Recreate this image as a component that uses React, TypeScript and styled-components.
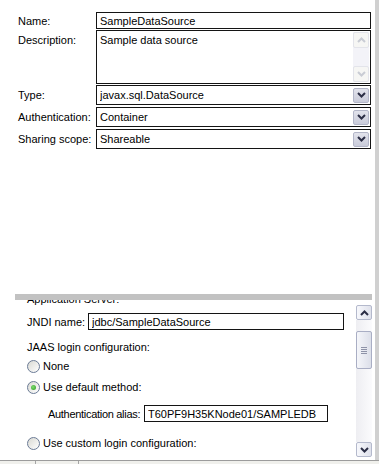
import React from "react";
import styled, { createGlobalStyle } from "styled-components";

const Global = createGlobalStyle`
  html, body { margin: 0; padding: 0; background: #fff; }
  body {
    font-family: "Liberation Sans", Arial, sans-serif;
    font-size: 11px;
    color: #000;
  }
`;

const Frame = styled.div`
  width: 379px;
  height: 464px;
  display: flex;
  flex-direction: column;
  overflow: hidden;
  background: #fff;
`;

const Body = styled.div`
  display: flex;
  height: 460px;
  flex: none;
`;

const Main = styled.div`
  width: 375px;
  display: flex;
  flex-direction: column;
`;

const RightEdge = styled.div`
  width: 4px;
  background: #d0d0d0;
`;

const Form = styled.div`
  height: 294px;
  flex: none;
  box-sizing: border-box;
  padding: 12px 4px 0 18px;
  display: flex;
  flex-direction: column;
`;

const FormRow = styled.div<{ $mt: number; $top?: boolean }>`
  display: flex;
  align-items: ${(p) => (p.$top ? "flex-start" : "center")};
  margin-top: ${(p) => p.$mt}px;
`;

const Label = styled.div<{ $w: number; $pt?: number; $tight?: boolean }>`
  width: ${(p) => p.$w}px;
  flex: none;
  white-space: nowrap;
  line-height: 14px;
  padding-top: ${(p) => p.$pt ?? 0}px;
  letter-spacing: ${(p) => (p.$tight ? "-0.3px" : "normal")};
`;

const Field = styled.div<{ $h: number; $w?: number }>`
  box-sizing: border-box;
  height: ${(p) => p.$h}px;
  width: ${(p) => (p.$w ? `${p.$w}px` : "auto")};
  flex: ${(p) => (p.$w ? "none" : "1")};
  border: 1px solid #141414;
  background: #fff;
  display: flex;
  align-items: center;
  padding: 0 1px 0 3px;
  white-space: nowrap;
  overflow: hidden;
`;

const AreaField = styled(Field)`
  align-items: stretch;
  padding: 1px 1px 1px 3px;
`;

const Value = styled.span`
  flex: 1;
  overflow: hidden;
  line-height: 14px;
`;

const AreaText = styled.div`
  flex: 1;
  line-height: 14px;
  padding-top: 1px;
`;

const DescScroll = styled.div`
  width: 16px;
  display: flex;
  flex-direction: column;
  background: #f3f3f8;
`;

const ScrollBtn = styled.div<{ $kind: "disabled" | "combo" | "bar" }>`
  flex: none;
  box-sizing: border-box;
  width: 16px;
  height: ${(p) => (p.$kind === "disabled" ? 16 : 15)}px;
  border-radius: 2px;
  display: flex;
  align-items: center;
  justify-content: center;
  border: 1px solid
    ${(p) =>
      p.$kind === "disabled" ? "#e3e4ea" : p.$kind === "combo" ? "#b3b6c8" : "#b4b9cc"};
  background: ${(p) =>
    p.$kind === "disabled"
      ? "#f6f6f4"
      : p.$kind === "combo"
      ? "linear-gradient(#e2e3ec, #c9cbd9)"
      : "linear-gradient(to right, #f7f8fc, #dfe1eb)"};
`;

const Track = styled.div`
  flex: 1;
  display: flex;
  flex-direction: column;
`;

const Lower = styled.div`
  height: 166px;
  flex: none;
  margin: 0 3px 0 15px;
  display: flex;
  flex-direction: column;
`;

const SectionBar = styled.div`
  height: 6px;
  flex: none;
  background: #c2c2c2;
`;

const LowerBody = styled.div`
  flex: 1;
  min-height: 0;
  display: flex;
`;

const Content = styled.div`
  flex: 1;
  min-width: 0;
  overflow: hidden;
  padding-left: 12px;
  display: flex;
  flex-direction: column;
`;

const Line = styled.div<{ $h: number; $mt: number; $indent?: number }>`
  flex: none;
  height: ${(p) => p.$h}px;
  margin-top: ${(p) => p.$mt}px;
  padding-left: ${(p) => p.$indent ?? 0}px;
  display: flex;
  align-items: center;
  gap: 3px;
  white-space: nowrap;
`;

const VScroll = styled.div`
  width: 16px;
  flex: none;
  box-sizing: border-box;
  padding: 5px 0 3px;
  display: flex;
  flex-direction: column;
`;

const BarTrack = styled.div`
  flex: 1;
  display: flex;
  flex-direction: column;
  background: linear-gradient(to right, #eeeef2, #fbfbfd);
`;

const Thumb = styled.div`
  margin-top: 11px;
  height: 38px;
  box-sizing: border-box;
  border: 1px solid #a9aec4;
  border-radius: 2px;
  background: linear-gradient(to right, #f5f6fa, #dcdfe9);
  display: flex;
  align-items: center;
  justify-content: center;
`;

const Grip = styled.span`
  width: 6px;
  height: 7px;
  background: repeating-linear-gradient(#8e93a8 0 1px, transparent 1px 2px);
`;

const RadioCircle = styled.span`
  width: 13px;
  height: 13px;
  flex: none;
  box-sizing: border-box;
  border-radius: 50%;
  border: 1px solid #6b7b96;
  background: linear-gradient(135deg, #d9d9d3, #ffffff);
  display: flex;
  align-items: center;
  justify-content: center;
`;

const RadioDot = styled.span`
  width: 5px;
  height: 5px;
  border-radius: 50%;
  background: radial-gradient(circle at 40% 40%, #7fdc6f, #2a9a22);
`;

const Tabs = styled.div`
  height: 4px;
  flex: none;
  box-sizing: border-box;
  border-top: 1px solid #9c9c9c;
  background: #f0f0ec;
  display: flex;
`;

const Tab = styled.div<{ $w: number }>`
  width: ${(p) => p.$w}px;
  flex: none;
  border-right: 1px solid #a4a4a4;
`;

const Chevron = ({ up, color }: { up?: boolean; color: string }) => (
  <svg width="9" height="6" viewBox="0 0 9 6">
    <polyline
      points={up ? "1,5 4.5,1.5 8,5" : "1,1 4.5,4.5 8,1"}
      fill="none"
      stroke={color}
      strokeWidth="2"
    />
  </svg>
);

const Select = ({ value }: { value: string }) => (
  <Field $h={20}>
    <Value>{value}</Value>
    <ScrollBtn $kind="combo">
      <Chevron color="#2b2e45" />
    </ScrollBtn>
  </Field>
);

const Radio = ({ on, label }: { on?: boolean; label: string }) => (
  <>
    <RadioCircle>{on && <RadioDot />}</RadioCircle>
    <span>{label}</span>
  </>
);

export default function App() {
  return (
    <>
      <Global />
      <Frame>
        <Body>
          <Main>
            <Form>
              <FormRow $mt={0}>
                <Label $w={78}>Name:</Label>
                <Field $h={17}>
                  <Value>SampleDataSource</Value>
                </Field>
              </FormRow>
              <FormRow $mt={1} $top>
                <Label $w={78} $pt={3}>Description:</Label>
                <AreaField $h={54}>
                  <AreaText>Sample data source</AreaText>
                  <DescScroll>
                    <ScrollBtn $kind="disabled">
                      <Chevron up color="#c9ccd4" />
                    </ScrollBtn>
                    <Track />
                    <ScrollBtn $kind="disabled">
                      <Chevron color="#c9ccd4" />
                    </ScrollBtn>
                  </DescScroll>
                </AreaField>
              </FormRow>
              <FormRow $mt={1}>
                <Label $w={78}>Type:</Label>
                <Select value="javax.sql.DataSource" />
              </FormRow>
              <FormRow $mt={2}>
                <Label $w={78}>Authentication:</Label>
                <Select value="Container" />
              </FormRow>
              <FormRow $mt={2}>
                <Label $w={78}>Sharing scope:</Label>
                <Select value="Shareable" />
              </FormRow>
            </Form>
            <Lower>
              <SectionBar />
              <LowerBody>
                <Content>
                  <Line $h={20} $mt={-11}>Application Server:</Line>
                  <Line $h={17} $mt={4}>
                    <Label $w={58}>JNDI name:</Label>
                    <Field $h={17} $w={256}>
                      <Value>jdbc/SampleDataSource</Value>
                    </Field>
                  </Line>
                  <Line $h={18} $mt={8}>JAAS login configuration:</Line>
                  <Line $h={18} $mt={1}>
                    <Radio label="None" />
                  </Line>
                  <Line $h={18} $mt={3}>
                    <Radio on label="Use default method:" />
                  </Line>
                  <Line $h={17} $mt={9} $indent={21}>
                    <Label $w={93} $tight>Authentication alias:</Label>
                    <Field $h={17} $w={184}>
                      <Value>T60PF9H35KNode01/SAMPLEDB</Value>
                    </Field>
                  </Line>
                  <Line $h={18} $mt={12}>
                    <Radio label="Use custom login configuration:" />
                  </Line>
                </Content>
                <VScroll>
                  <ScrollBtn $kind="bar">
                    <Chevron up color="#2b2e45" />
                  </ScrollBtn>
                  <BarTrack>
                    <Thumb>
                      <Grip />
                    </Thumb>
                  </BarTrack>
                  <ScrollBtn $kind="bar">
                    <Chevron color="#2b2e45" />
                  </ScrollBtn>
                </VScroll>
              </LowerBody>
            </Lower>
          </Main>
          <RightEdge />
        </Body>
        <Tabs>
          <Tab $w={35} />
          <Tab $w={42} />
        </Tabs>
      </Frame>
    </>
  );
}
